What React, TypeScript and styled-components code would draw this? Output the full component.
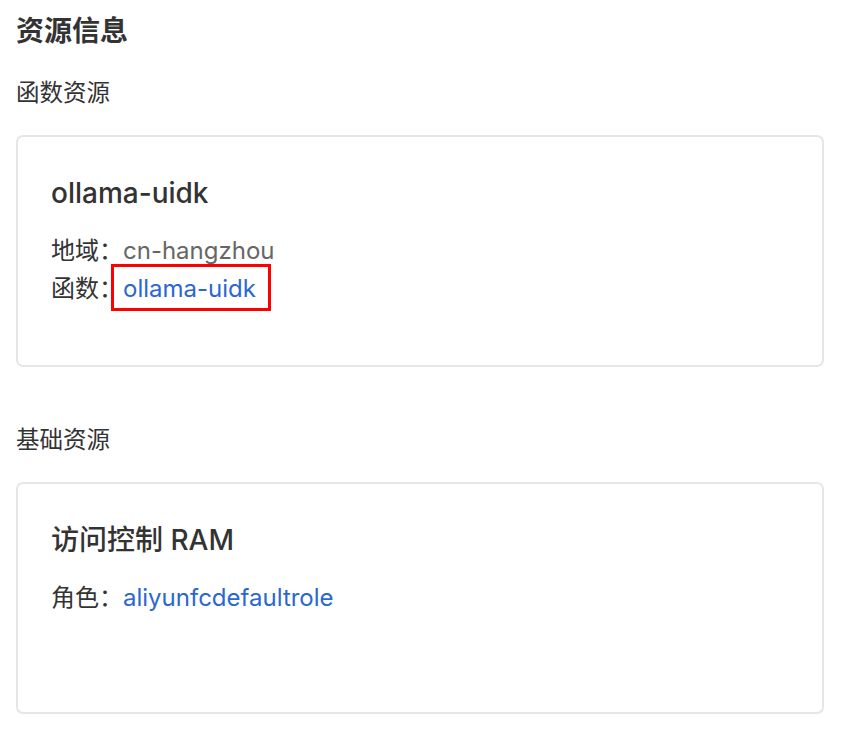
import React from "react";
import styled, { createGlobalStyle } from "styled-components";

const GlobalStyle = createGlobalStyle`
  html, body {
    margin: 0;
    padding: 0;
    background: #ffffff;
  }
  body {
    font-family: Inter, "Noto Sans CJK SC", "Noto Sans", sans-serif;
    color: #333333;
  }
  * { box-sizing: border-box; }
`;

const Page = styled.div`
  padding: 11px 22px 24px 16px;
  display: flex;
  flex-direction: column;
`;

const PageTitle = styled.h1`
  margin: 0;
  font-size: 28px;
  line-height: 40px;
  font-weight: 600;
  color: #333333;
`;

const SectionTitle = styled.h2<{ $top: number }>`
  margin: ${(p) => p.$top}px 0 0 0;
  font-size: 23.5px;
  line-height: 34px;
  font-weight: 400;
  color: #333333;
`;

const Card = styled.div`
  margin-top: 25px;
  min-height: 232px;
  border: 2px solid #e6e6e6;
  border-radius: 7px;
  padding: 36px 32px 30px 33px;
  display: flex;
  flex-direction: column;
`;

const CardTitle = styled.div`
  font-size: 28px;
  line-height: 40px;
  font-weight: 500;
  color: #333333;
`;

const InfoList = styled.div`
  margin-top: 19px;
  display: flex;
  flex-direction: column;
`;

const InfoRow = styled.div`
  display: flex;
  align-items: baseline;
  font-size: 24px;
  line-height: 38px;
`;

const Label = styled.span`
  color: #333333;
`;

const Value = styled.span`
  color: #666666;
`;

const Link = styled.a<{ $marked?: boolean }>`
  color: #2b67cf;
  text-decoration: none;
  position: relative;
  cursor: pointer;
  ${(p) =>
    p.$marked
      ? `
    &::after {
      content: "";
      position: absolute;
      left: -12px;
      right: -15px;
      top: -6px;
      bottom: -3px;
      border: 3px solid #ff0000;
      pointer-events: none;
    }
  `
      : ""}
`;

export default function App() {
  return (
    <>
      <GlobalStyle />
      <Page>
        <PageTitle>资源信息</PageTitle>

        <SectionTitle $top={25}>函数资源</SectionTitle>
        <Card>
          <CardTitle>ollama-uidk</CardTitle>
          <InfoList>
            <InfoRow>
              <Label>地域：</Label>
              <Value>cn-hangzhou</Value>
            </InfoRow>
            <InfoRow>
              <Label>函数：</Label>
              <Link $marked>ollama-uidk</Link>
            </InfoRow>
          </InfoList>
        </Card>

        <SectionTitle $top={56}>基础资源</SectionTitle>
        <Card>
          <CardTitle>访问控制 RAM</CardTitle>
          <InfoList>
            <InfoRow>
              <Label>角色：</Label>
              <Link>aliyunfcdefaultrole</Link>
            </InfoRow>
          </InfoList>
        </Card>
      </Page>
    </>
  );
}
